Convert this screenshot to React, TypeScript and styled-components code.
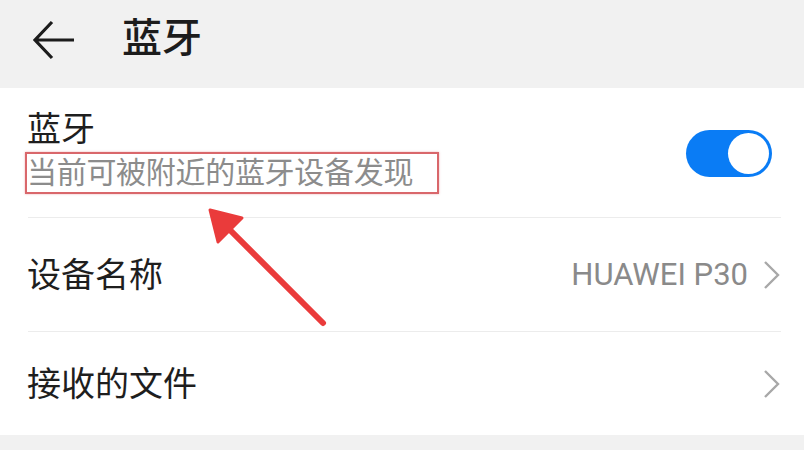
import React from "react";
import styled, { createGlobalStyle } from "styled-components";

const GlobalStyle = createGlobalStyle`
  html, body {
    margin: 0;
    padding: 0;
    background: #f1f1f1;
  }
  body {
    font-family: Roboto, "Noto Sans CJK SC", sans-serif;
    color: #1a1a1a;
  }
`;

const Screen = styled.div`
  position: relative;
  width: 804px;
  height: 450px;
  overflow: hidden;
  background: #f1f1f1;
`;

const Header = styled.header`
  height: 88px;
  display: flex;
  align-items: center;
  padding-left: 32px;
  gap: 44px;
  box-sizing: border-box;
`;

const BackButton = styled.div`
  width: 46px;
  height: 40px;
  display: flex;
  align-items: center;
  margin-top: -8px;
`;

const Title = styled.h1`
  margin: 0;
  font-size: 40px;
  font-weight: 500;
  color: #1c1c1c;
  line-height: 1;
  margin-top: -10px;
`;

const List = styled.section`
  background: #fff;
  height: 347px;
  padding: 0 23px 0 28px;
  box-sizing: border-box;
  display: flex;
  flex-direction: column;
`;

const Row = styled.div<{ $height: number; $last?: boolean }>`
  height: ${(p) => p.$height}px;
  display: flex;
  align-items: center;
  justify-content: space-between;
  border-bottom: ${(p) => (p.$last ? "none" : "1px solid #ececec")};
  box-sizing: border-box;
`;

const TextCol = styled.div`
  display: flex;
  flex-direction: column;
`;

const Label = styled.span`
  font-size: 34px;
  line-height: 1;
  color: #1e1e1e;
  margin-left: -1px;
`;

const Hint = styled.span`
  margin-top: 6px;
  margin-left: -3px;
  padding: 4px 24px 4px 0;
  font-size: 30px;
  line-height: 1;
  color: #8c8c8c;
  border: 2px solid #d9676b;
  box-shadow: 0 0 2px rgba(217, 103, 107, 0.5);
  letter-spacing: -0.3px;
`;

const Toggle = styled.div`
  width: 86px;
  height: 47px;
  border-radius: 24px;
  background: #0a7cf5;
  display: flex;
  align-items: center;
  justify-content: flex-end;
  padding: 3px;
  box-sizing: border-box;
  margin-top: 2px;
  margin-right: 9px;
`;

const Knob = styled.div`
  width: 41px;
  height: 41px;
  border-radius: 50%;
  background: #fff;
`;

const Trail = styled.div`
  display: flex;
  align-items: center;
  gap: 15px;
`;

const Value = styled.span`
  font-size: 31px;
  color: #8a8a8a;
  line-height: 1;
`;

const Pointer = styled.svg`
  position: absolute;
  left: 200px;
  top: 200px;
`;

const Chevron = () => (
  <svg width="18" height="30" viewBox="0 0 18 30">
    <path d="M2 2 L15 15 L2 28" fill="none" stroke="#a8a8a8" strokeWidth="2.4" />
  </svg>
);

const App = () => {
  return (
    <Screen>
      <GlobalStyle />
      <Header>
        <BackButton>
          <svg width="44" height="40" viewBox="0 0 44 40">
            <path
              d="M42 20 H4 M20 2 L3 20 L20 38"
              fill="none"
              stroke="#1c1c1c"
              strokeWidth="3.2"
            />
          </svg>
        </BackButton>
        <Title>蓝牙</Title>
      </Header>
      <List>
        <Row $height={130}>
          <TextCol>
            <Label>蓝牙</Label>
            <Hint>当前可被附近的蓝牙设备发现</Hint>
          </TextCol>
          <Toggle>
            <Knob />
          </Toggle>
        </Row>
        <Row $height={114}>
          <Label>设备名称</Label>
          <Trail>
            <Value>HUAWEI P30</Value>
            <Chevron />
          </Trail>
        </Row>
        <Row $height={103} $last>
          <Label>接收的文件</Label>
          <Chevron />
        </Row>
      </List>
      <Pointer width="140" height="140" viewBox="0 0 140 140">
        <line x1="123" y1="123" x2="22" y2="22" stroke="#ea3b3b" strokeWidth="6" strokeLinecap="round" />
        <polygon points="10,10 42,18 18,42" fill="#ea3b3b" stroke="#ea3b3b" strokeWidth="3" strokeLinejoin="round" />
      </Pointer>
    </Screen>
  );
};

export default App;
